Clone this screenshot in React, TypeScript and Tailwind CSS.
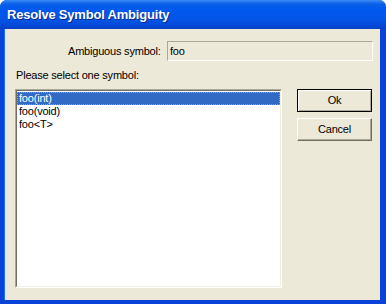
const items = ["foo(int)", "foo(void)", "foo<T>"];

export default function App() {
  return (
    <div className="h-[304px] w-[386px] overflow-hidden bg-white font-['Liberation_Sans',Arial,sans-serif] text-[11px] tracking-[-0.2px] text-black">
      <div className="flex h-full w-full flex-col rounded-t-[7px] bg-[#0842d6]">
        {/* title bar */}
        <div className="flex h-[29px] shrink-0 items-center rounded-t-[7px] bg-[linear-gradient(to_bottom,#3b8cf6_0px,#0a5fe8_4px,#0058ee_10px,#0554e6_20px,#0348d4_26px,#0a3fc4_29px)] pl-[7px]">
          <span className="text-[13px] font-bold tracking-[-0.2px] text-white [text-shadow:1px_1px_0_#0a2a8c]">
            Resolve Symbol Ambiguity
          </span>
        </div>

        {/* client area */}
        <div className="mb-[4px] ml-[4px] mr-[6px] h-[271px] shrink-0 overflow-hidden border-l border-[#1c6ef6] bg-[#ece9d8]">
          <div className="flex h-[32px] items-center pl-[63px] pt-[12px]">
            <span className="w-[91px] whitespace-nowrap text-right">Ambiguous symbol:</span>
            <div className="ml-[8px] flex h-[20px] w-[206px] items-center border border-t-[#aca899] border-l-[#aca899] border-r-white border-b-white pl-[2px]">
              foo
            </div>
          </div>

          <div className="mt-[8px] h-[13px] whitespace-nowrap pl-[11px] leading-[13px]">Please select one symbol:</div>

          <div className="mt-[7px] flex pl-[10px]">
            <div className="h-[199px] w-[267px] border border-t-[#aca899] border-l-[#aca899] border-r-white border-b-white">
              <div className="h-full w-full border border-t-[#716f64] border-l-[#716f64] border-r-[#f1efe2] border-b-[#f1efe2] bg-white pt-[1px]">
                {items.map((item, i) => (
                  <div
                    key={item}
                    className={
                      i === 0
                        ? "h-[13px] border border-dotted border-[#cf9a3c] bg-[#316ac5] pl-[1px] leading-[11px] text-white"
                        : "h-[13px] pl-[2px] leading-[13px]"
                    }
                  >
                    {item}
                  </div>
                ))}
              </div>
            </div>

            <div className="ml-[15px] flex flex-col gap-[6px]">
              <button className="h-[23px] w-[75px] border border-black bg-[#ece9d8] shadow-[inset_1px_1px_0_#fff,inset_-1px_-1px_0_#aca899]">
                Ok
              </button>
              <button className="h-[23px] w-[75px] border border-t-white border-l-white border-r-[#716f64] border-b-[#716f64] bg-[#ece9d8] shadow-[inset_-1px_-1px_0_#aca899]">
                Cancel
              </button>
            </div>
          </div>
        </div>
      </div>
    </div>
  );
}
